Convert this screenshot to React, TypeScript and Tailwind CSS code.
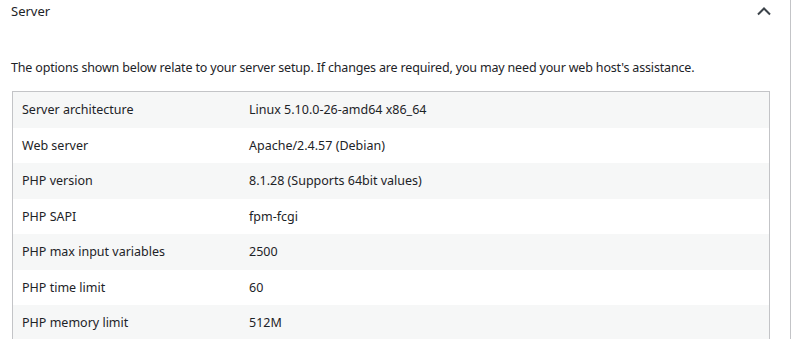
import React from 'react';

const ROWS: [string, string][] = [
  ['Server architecture', 'Linux 5.10.0-26-amd64 x86_64'],
  ['Web server', 'Apache/2.4.57 (Debian)'],
  ['PHP version', '8.1.28 (Supports 64bit values)'],
  ['PHP SAPI', 'fpm-fcgi'],
  ['PHP max input variables', '2500'],
  ['PHP time limit', '60'],
  ['PHP memory limit', '512M'],
];

function ChevronUp() {
  return (
    <svg width="16" height="10" viewBox="0 0 16 10" className="text-[#3c434a]">
      <path d="M2 8.5 L8 2.5 L14 8.5" fill="none" stroke="currentColor" strokeWidth="2" />
    </svg>
  );
}

export default function App() {
  return (
    <div className="w-[793px] h-[339px] overflow-hidden bg-white font-['Noto_Sans',sans-serif] text-[12.5px] text-[#1d2327]">
      <div className="w-[791px] h-full border-r border-[#c3c4c7]">
        {/* Header */}
        <div className="flex items-center justify-between h-[22px] pl-[11px] pr-[18px]">
          <span className="leading-none text-[13px]">Server</span>
          <ChevronUp />
        </div>

        {/* Intro */}
        <p className="mt-[36px] pl-[11px] leading-[20px] tracking-[-0.17px]">
          The options shown below relate to your server setup. If changes are required, you may need your web host's assistance.
        </p>

        {/* Table */}
        <div className="mt-[13px] ml-[12px] w-[758px] border border-[#c3c4c7]">
          {ROWS.map(([label, value], i) => (
            <div
              key={label}
              className={`flex items-center h-[35.5px] pt-[2px] ${i % 2 === 0 ? 'bg-[#f6f7f7]' : 'bg-white'}`}
            >
              <div className="w-[236px] pl-[9px]">{label}</div>
              <div className="flex-1">{value}</div>
            </div>
          ))}
        </div>
      </div>
    </div>
  );
}
